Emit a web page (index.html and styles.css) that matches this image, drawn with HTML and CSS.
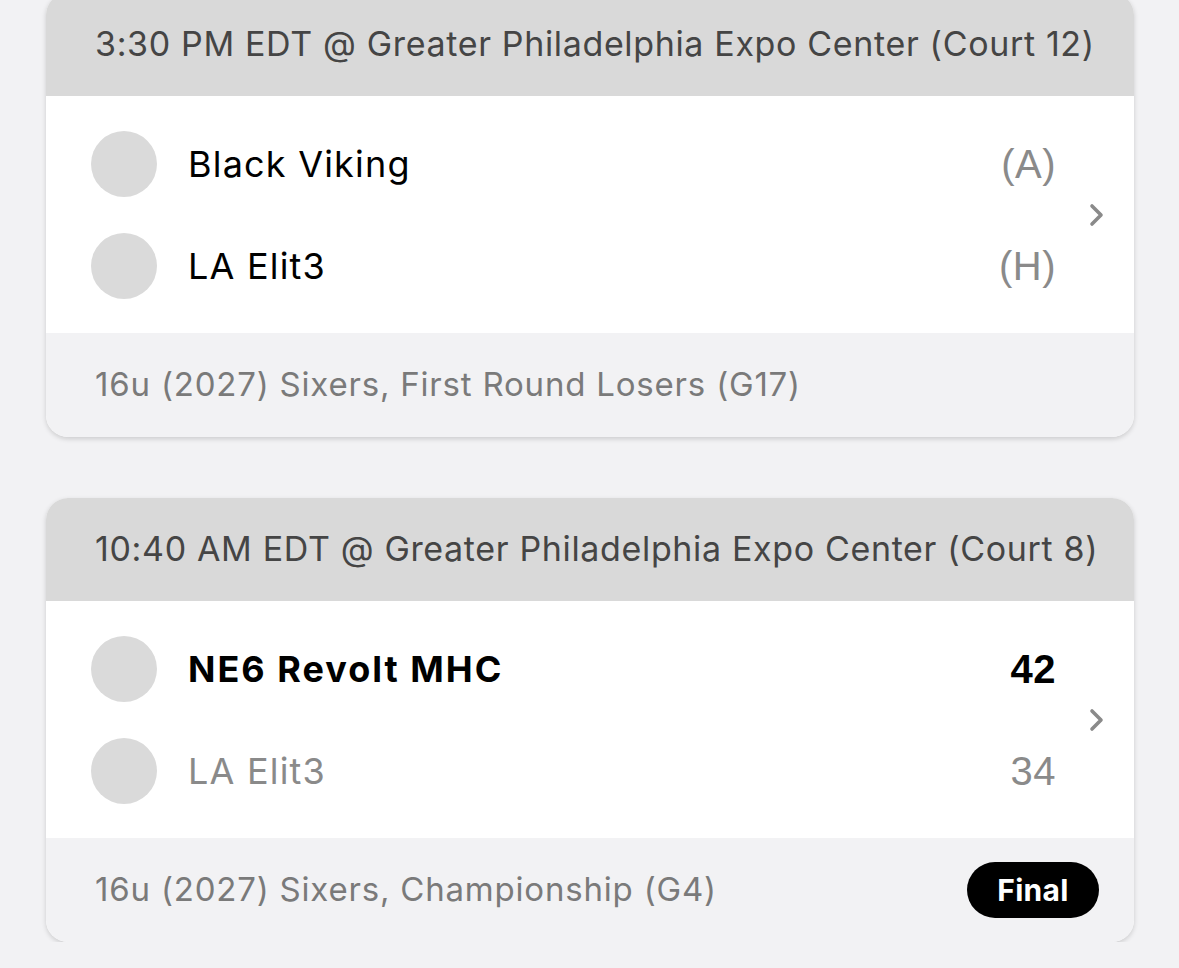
FILE: index.html
```html
<!DOCTYPE html>
<html>
<head>
<meta charset="utf-8">
<link rel="stylesheet" href="styles.css">
</head>
<body>
<div class="list">
  <div class="card first">
    <div class="card-head">3:30 PM EDT @ Greater Philadelphia Expo Center (Court 12)</div>
    <div class="card-body">
      <div class="rows">
        <div class="row"><span class="avatar"></span><span class="name">Black Viking</span><span class="score dim">(A)</span></div>
        <div class="row"><span class="avatar"></span><span class="name">LA Elit3</span><span class="score dim">(H)</span></div>
      </div>
      <div class="chev"><svg width="18" height="28" viewBox="0 0 18 28"><path d="M4 5 L13 14 L4 23" fill="none" stroke="#8a8a8a" stroke-width="3.6" stroke-linecap="round" stroke-linejoin="round"/></svg></div>
    </div>
    <div class="card-foot"><span class="foot-text">16u (2027) Sixers, First Round Losers (G17)</span></div>
  </div>
  <div class="card">
    <div class="card-head">10:40 AM EDT @ Greater Philadelphia Expo Center (Court 8)</div>
    <div class="card-body">
      <div class="rows">
        <div class="row"><span class="avatar"></span><span class="name win">NE6 Revolt MHC</span><span class="score win">42</span></div>
        <div class="row"><span class="avatar"></span><span class="name lose">LA Elit3</span><span class="score dim">34</span></div>
      </div>
      <div class="chev"><svg width="18" height="28" viewBox="0 0 18 28"><path d="M4 5 L13 14 L4 23" fill="none" stroke="#8a8a8a" stroke-width="3.6" stroke-linecap="round" stroke-linejoin="round"/></svg></div>
    </div>
    <div class="card-foot"><span class="foot-text">16u (2027) Sixers, Championship (G4)</span><span class="pill">Final</span></div>
  </div>
</div>
</body>
</html>
```
FILE: styles.css
```css
html, body {
  margin: 0;
  padding: 0;
  background: #f2f2f4;
}
body {
  font-family: Inter, "Noto Sans", sans-serif;
  overflow: hidden;
}
.list {
  display: flex;
  flex-direction: column;
  gap: 61px;
  padding: 0 45px 0 46px;
}
.card {
  background: #fff;
  border-radius: 22px;
  overflow: hidden;
  box-shadow: 0 2px 5px rgba(0,0,0,0.16);
}
.first {
  margin-top: -7px;
}
.card-head {
  height: 103px;
  box-sizing: border-box;
  background: #d9d9d9;
  color: #454545;
  font-size: 34px;
  display: flex;
  align-items: center;
  padding-left: 49px;
  padding-bottom: 2px;
  letter-spacing: 0.65px;
  white-space: nowrap;
}
.card-body {
  display: flex;
  background: #fff;
  height: 237px;
  box-sizing: border-box;
  padding: 16px 0;
  border-top: 1px solid #fff;
}
.rows {
  flex: 1;
  display: flex;
  flex-direction: column;
  padding-left: 45px;
}
.row {
  height: 102px;
  display: flex;
  align-items: center;
}
.avatar {
  width: 66px;
  height: 66px;
  border-radius: 50%;
  background: #dadada;
  flex: none;
}
.name {
  margin-left: 31px;
  font-size: 36px;
  color: #000;
  flex: 1;
  letter-spacing: 1.2px;
}
.name.win { font-weight: 700; letter-spacing: 2px; }
.name.lose { color: #8a8a8a; }
.score {
  font-family: "Liberation Sans", Arial, sans-serif;
  font-size: 40px;
  color: #000;
  letter-spacing: 0.5px;
  margin-right: -1px;
}
.score.win { font-weight: 700; }
.score.dim { color: #8a8a8a; }
.chev {
  width: 79px;
  display: flex;
  align-items: center;
  padding-left: 33px;
  box-sizing: border-box;
}
.card-foot {
  height: 104px;
  background: #f2f2f4;
  display: flex;
  align-items: center;
  justify-content: space-between;
  padding: 0 35px 0 49px;
}
.foot-text {
  color: #7a7a7a;
  font-size: 33px;
  letter-spacing: 0.8px;
  margin-top: -3px;
}
.pill {
  background: #000;
  color: #fff;
  font-weight: 700;
  font-size: 30px;
  height: 56px;
  width: 132px;
  border-radius: 28px;
  display: flex;
  align-items: center;
  justify-content: center;
  letter-spacing: 0.3px;
}
```
